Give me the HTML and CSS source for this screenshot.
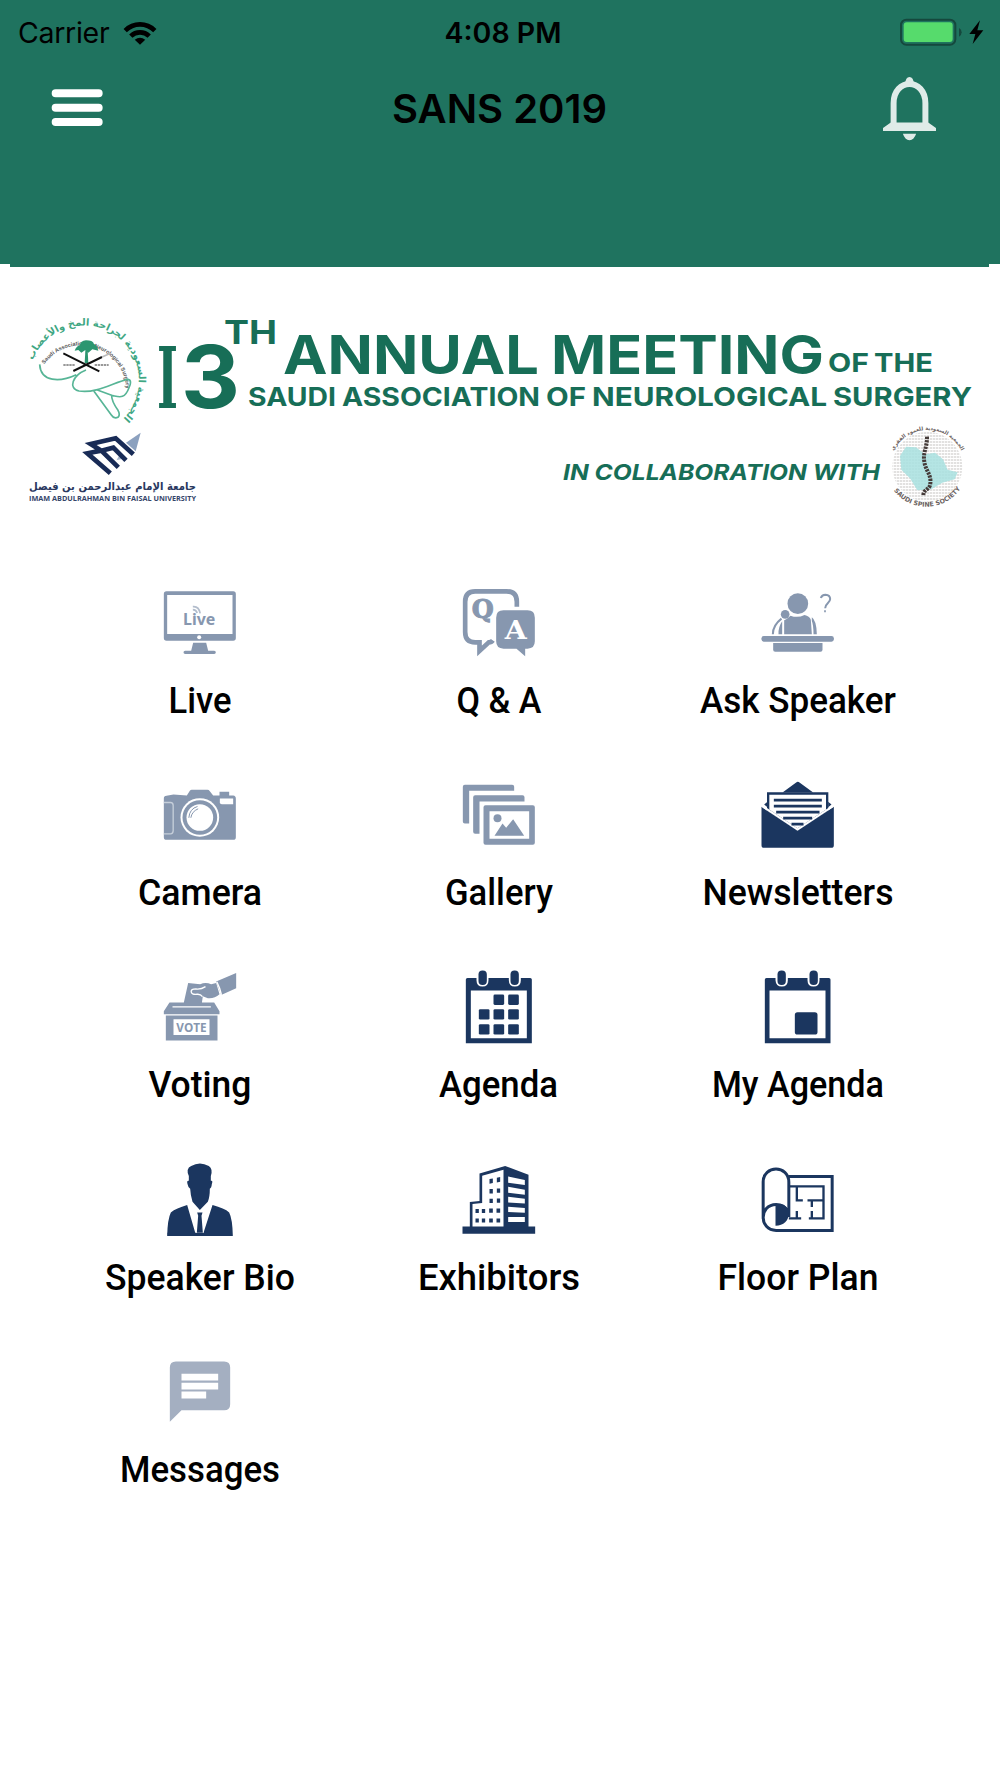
FILE: index.html
```html
<!DOCTYPE html>
<html lang="en">
<head>
<meta charset="utf-8">
<title>SANS 2019</title>
<link rel="stylesheet" href="styles.css">
</head>
<body>
<header class="header">
  <div class="status">
    <div class="status-left">
      <span class="carrier">Carrier</span>
      <svg class="wifi" viewBox="0 0 102 76"><path d="M1 27A71 71 0 0 1 101 27L91 37A57 57 0 0 0 11 37ZM18 44A47 47 0 0 1 84 44L74 54A33 33 0 0 0 28 54ZM35 60A26 26 0 0 1 67 60L51 75Z"/></svg>
    </div>
    <span class="time">4:08 PM</span>
    <svg class="battery" viewBox="0 0 252 84"><rect x="3" y="5" width="163" height="75" rx="16" fill="none" stroke="#15483d" stroke-width="6"/><path d="M177 30q8 4 8 13t-8 13Z" fill="#15483d"/><rect x="11" y="13" width="147" height="59" rx="9" fill="#56db6c"/><path d="M240 7L208 48h18l-8 30 32-41h-18Z"/></svg>
  </div>
  <div class="nav">
    <svg class="menu" viewBox="0 0 156 114"><path d="M14 13H143M14 56H143M14 99H143" fill="none" stroke="#fff" stroke-width="24" stroke-linecap="round"/></svg>
    <h1 class="title">SANS 2019</h1>
    <svg class="bell" viewBox="0 0 160 196"><path d="M67 24q1-21 13-21t13 21Z" fill="#dfebe8"/><path d="M32 145V82C32 5 128 5 128 82V145L145 157H15Z" fill="none" stroke="#dfebe8" stroke-width="18"/><path d="M2 164L24 140H136L158 164ZM60 174h40q-6 18-20 20-14-2-20-20Z" fill="#dfebe8"/></svg>
  </div>
</header>
<div class="header-edge"></div>

<svg class="banner" viewBox="0 267 1000 303">
  <defs>
    <path id="arc-ar" d="M32 362A55 55 0 1 1 122 420"/>
    <path id="arc-en" d="M42 368A45 45 0 0 1 126 393"/>
    <path id="arc-top" d="M893 452A38 38 0 0 1 962 452"/>
    <path id="arc-bot" d="M892 488A41 41 0 0 0 962 486"/>
    <pattern id="print" width="9" height="9" patternUnits="userSpaceOnUse"><path d="M0 3H7" stroke="#d4d2d1" stroke-width="4"/></pattern>
  </defs>

  <text class="arabic-arc"><textPath href="#arc-ar" startOffset="50%">الجمعية السعودية لجراحة المخ والأعصاب</textPath></text>
  <text class="english-arc"><textPath href="#arc-en" startOffset="50%">Saudi Association of Neurological Surgery</textPath></text>
  <g transform="translate(0 300) scale(.33333)">
    <g fill="none" stroke="#57b596" stroke-width="5" stroke-linejoin="round">
      <path d="M119 193C122 247 180 247 229 224M258 210C218 226 203 265 237 273C290 282 345 245 384 238C396 240 391 255 387 263C374 298 358 291 339 287L292 270M282 274L334 345Q342 358 355 351Q361 343 354 331Q334 302 335 286"/>
    </g>
    <path d="M224 152q5-14 16-17 1-12 18-14 20 0 23 10 11 4 14 21l-18-4-12 10-10-7-11 7-9-8Z" fill="#2c9670"/>
    <path d="M256 152h7l2 38h-11Z" fill="#2c9670"/>
    <path d="M190 160L298 214M220 213L306 171" stroke="#111" stroke-width="6"/>
    <path d="M306 171L332 160" stroke="#bbb" stroke-width="5"/>
    <path d="M190 195h35M284 195h42" stroke="#777" stroke-width="5" stroke-dasharray="7 2"/>
    <path d="M422 398L378 428 407 454Z" fill="#8ca1bf"/>
    <path d="M350 480L362 458 382 475Z" fill="#a9b7cc"/>
    <path d="M400 463L347 415 272 432 304 452 340 443 378 481M304 452L355 502M304 452L262 460 331 520" fill="none" stroke="#182b56" stroke-width="14"/>
  </g>
  <text class="uni-ar" x="112.5" y="490" textLength="167" lengthAdjust="spacingAndGlyphs">جامعة الإمام عبدالرحمن بن فيصل</text>
  <text class="uni-en" x="29" y="501" textLength="167" lengthAdjust="spacingAndGlyphs">IMAM ABDULRAHMAN BIN FAISAL UNIVERSITY</text>

  <g class="headline">
    <text class="serif" x="157" y="408" font-size="85" textLength="21" lengthAdjust="spacingAndGlyphs">I</text>
    <text x="181" y="407.5" font-size="86" textLength="59" lengthAdjust="spacingAndGlyphs">3</text>
    <text x="224" y="344" font-size="32" textLength="53" lengthAdjust="spacingAndGlyphs">TH</text>
    <text x="283" y="374" font-size="53" textLength="256" lengthAdjust="spacingAndGlyphs">ANNUAL</text>
    <text x="551" y="374" font-size="53" textLength="273" lengthAdjust="spacingAndGlyphs">MEETING</text>
    <text x="828" y="371.5" font-size="26" textLength="41" lengthAdjust="spacingAndGlyphs">OF</text>
    <text x="874" y="371.5" font-size="26" textLength="59" lengthAdjust="spacingAndGlyphs">THE</text>
    <text x="248" y="405.5" font-size="26" textLength="88" lengthAdjust="spacingAndGlyphs">SAUDI</text>
    <text x="342" y="405.5" font-size="26" textLength="198" lengthAdjust="spacingAndGlyphs">ASSOCIATION</text>
    <text x="546" y="405.5" font-size="26" textLength="40" lengthAdjust="spacingAndGlyphs">OF</text>
    <text x="592" y="405.5" font-size="26" textLength="235" lengthAdjust="spacingAndGlyphs">NEUROLOGICAL</text>
    <text x="833" y="405.5" font-size="26" textLength="139" lengthAdjust="spacingAndGlyphs">SURGERY</text>
    <text class="slanted" x="563" y="479.5" font-size="22" textLength="317" lengthAdjust="spacingAndGlyphs">IN COLLABORATION WITH</text>
  </g>

  <g transform="translate(540 300) scale(.33333)">
    <circle cx="1162" cy="500" r="105" fill="url(#print)"/>
    <path d="M1080 468l18-28 30 2 27 21 30-5 24 20 14 31 30 8-9 21-37 10-33 20-42 3-22-36-26-26Z" fill="#a8e0df" opacity=".85"/>
    <path d="M1161 410C1162 440 1148 458 1153 485C1156 512 1177 525 1170 556C1164 572 1150 568 1150 588" fill="none" stroke="#453b39" stroke-width="12" stroke-dasharray="7 3"/>
  </g>
  <text class="spine-text spine-ar"><textPath href="#arc-top" startOffset="50%">الجمعية السعودية للعمود الفقري</textPath></text>
  <text class="spine-text"><textPath href="#arc-bot" startOffset="50%">SAUDI SPINE SOCIETY</textPath></text>
</svg>

<main class="grid">
  <a class="tile">
    <svg class="icon muted" viewBox="166.5 0 270 270"><path fill-rule="evenodd" d="M201 64H401Q409 64 409 72V204Q409 212 401 212H201Q193 212 193 204V72Q193 64 201 64ZM203 75V192H399V75Z"/><circle class="paper" cx="299" cy="202" r="6"/><path d="M281 218h39l6 24h18q5 0 5 5t-5 5h-87q-5 0-5-5t5-5h18Z"/><text class="live-text" x="299" y="164" textLength="97" lengthAdjust="spacingAndGlyphs">Live</text><path d="M280 110q18-2 22 20M280 119q10 0 13 10" fill="none" stroke="#b3bdcc" stroke-width="5"/></svg>
    <svg class="label" viewBox="0 0 240 102.2"><text x="120" y="52.7" textLength="63" lengthAdjust="spacingAndGlyphs">Live</text></svg>
  </a>
  <a class="tile">
    <svg class="icon muted" viewBox="1063.5 0 270 270"><path d="M1252 110V95Q1252 64 1221 64H1127Q1097 64 1097 95V186Q1097 217 1127 217H1140V243L1168 217Q1176 217 1180 211" fill="none" stroke="#8797af" stroke-width="14"/><path d="M1212 121H1284Q1306 121 1306 143V214Q1306 236 1284 236H1277V259L1251 236H1212Q1190 236 1190 214V143Q1190 121 1212 121Z"/><text class="qa-text q-glyph" x="1150" y="143" textLength="66" lengthAdjust="spacingAndGlyphs">Q</text><text class="qa-text paper" x="1249" y="207" textLength="66" lengthAdjust="spacingAndGlyphs">A</text></svg>
    <svg class="label" viewBox="0 0 240 102.2"><text x="120" y="52.7" textLength="85" lengthAdjust="spacingAndGlyphs">Q &amp; A</text></svg>
  </a>
  <a class="tile">
    <svg class="icon muted" viewBox="280.5 0 270 270"><circle cx="415" cy="101" r="31"/><circle cx="377" cy="133" r="13"/><path d="M374 193V151Q381 148 393 137Q415 145 435 135Q450 138 454 149L457 193ZM357 193q-1-22 11-39v39ZM457 142q14 9 15 51h-10q0-28-5-40Z"/><path d="M340 193Q340 166 366 146" fill="none" stroke="#8797af" stroke-width="6"/><rect x="306" y="198" width="217" height="17" rx="7"/><path d="M341 219H489V239Q489 245 483 245H347Q341 245 341 239Z"/><path d="M484 84q3-10 14-10 14 1 14 13c0 12-15 12-15 28M494 124h5" fill="none" stroke="#8797af" stroke-width="6"/></svg>
    <svg class="label" viewBox="0 0 240 102.2"><text x="120" y="52.7" textLength="196" lengthAdjust="spacingAndGlyphs">Ask Speaker</text></svg>
  </a>

  <a class="tile">
    <svg class="icon muted" viewBox="166.5 6.6 270 270"><path d="M193 116Q193 108 201 108L222 104 262 107 271 93Q273 90 277 90H324Q328 90 331 94L341 107H360V96H389V107H401Q409 108 409 116V232Q409 240 401 240H201Q193 240 193 232Z"/><circle class="paper" cx="301" cy="173" r="58"/><circle cx="301" cy="173" r="52"/><circle class="paper" cx="301" cy="173" r="40"/><path class="paper" d="M361 116h40v17h-34q-6 0-6-6Z"/><path d="M193 128h20q8 0 8 9v76q0 9-8 9h-20" fill="none" stroke="#c6cfda" stroke-width="4"/><path d="M268 174q2-27 26-34M274 174q3-19 22-27" fill="none" stroke="#8797af" stroke-width="3"/></svg>
    <svg class="label" viewBox="0 0 240 102.2"><text x="120" y="52.7" textLength="124" lengthAdjust="spacingAndGlyphs">Camera</text></svg>
  </a>
  <a class="tile">
    <svg class="icon muted" viewBox="1063.5 6.6 270 270"><path d="M1090 81Q1090 75 1096 75H1238Q1244 75 1244 81V93H1109V191H1096Q1090 191 1090 185ZM1121 112Q1121 106 1127 106H1269Q1275 106 1275 112V125H1140V222H1127Q1121 222 1121 216Z"/><path fill-rule="evenodd" d="M1158 136H1300Q1306 136 1306 142V249Q1306 255 1300 255H1158Q1152 255 1152 249V142Q1152 136 1158 136ZM1170 154V237H1289V154Z"/><circle cx="1194" cy="175" r="12"/><path d="M1185 228L1209 191 1220 204 1241 178 1274 228Z"/></svg>
    <svg class="label" viewBox="0 0 240 102.2"><text x="120" y="52.7" textLength="108" lengthAdjust="spacingAndGlyphs">Gallery</text></svg>
  </a>
  <a class="tile">
    <svg class="icon" viewBox="280.5 576.6 270 270"><path d="M369 668L410 638Q415 634 420 638L461 668ZM314 704l10-8v16ZM516 704l-10-8v16Z"/><path class="paper" d="M326 671H503V721L414 780 326 721Z" stroke="#1b365f" stroke-width="7"/><path d="M306 711L414 783 523 711V826Q523 834 515 834H314Q306 834 306 826Z"/><path class="paper" d="M310 706L414 775 519 706 523 711 414 783 306 711Z"/><path d="M343 691H487M343 709H487M350 727H480M371 745H458M396 763H432" stroke="#1b365f" stroke-width="8"/></svg>
    <svg class="label" viewBox="0 0 240 102.2"><text x="120" y="52.7" textLength="191" lengthAdjust="spacingAndGlyphs">Newsletters</text></svg>
  </a>

  <a class="tile">
    <svg class="icon muted" viewBox="166.5 13.2 270 270"><path d="M266 100L302 104Q318 96 335 104L350 100 360 134Q345 148 325 146L310 140 306 168H251ZM350 96L410 70V116L365 136ZM210 159H344L360 185V194H193V185Z"/><path d="M352 97q9 17 14 39" stroke="#fff" stroke-width="4" fill="none"/><path d="M318 111q-14 9-29 7-14 0-14 8 0 10 18 8 10-1 16 7" fill="none" stroke="#fff" stroke-width="4"/><path d="M219 172H334" stroke="#fff" stroke-width="4"/><path fill-rule="evenodd" d="M199 198H354V273H199ZM222 209V256H330V209Z"/><text class="vote-text" x="276" y="246" textLength="91" lengthAdjust="spacingAndGlyphs">VOTE</text></svg>
    <svg class="label" viewBox="0 0 240 102.2"><text x="120" y="52.7" textLength="103" lengthAdjust="spacingAndGlyphs">Voting</text></svg>
  </a>
  <a class="tile">
    <svg class="icon" viewBox="1063.5 13.2 270 270"><path fill-rule="evenodd" d="M1104 85H1292Q1297 85 1297 90V281H1099V90Q1099 85 1104 85ZM1114 123V266H1282V123Z"/><path class="paper" d="M1131 80H1167V92Q1167 111 1149 111T1131 92ZM1228 80H1264V92Q1264 111 1246 111T1228 92Z"/><rect x="1137" y="63" width="25" height="43" rx="12"/><rect x="1233" y="63" width="25" height="43" rx="12"/><g><rect x="1182" y="135" width="32" height="31" rx="4"/><rect x="1226" y="135" width="32" height="31" rx="4"/><rect x="1138" y="179" width="32" height="31" rx="4"/><rect x="1182" y="179" width="32" height="31" rx="4"/><rect x="1226" y="179" width="32" height="31" rx="4"/><rect x="1138" y="224" width="32" height="31" rx="4"/><rect x="1182" y="224" width="32" height="31" rx="4"/><rect x="1226" y="224" width="32" height="31" rx="4"/></g></svg>
    <svg class="label" viewBox="0 0 240 102.2"><text x="119.5" y="52.7" textLength="119" lengthAdjust="spacingAndGlyphs">Agenda</text></svg>
  </a>
  <a class="tile">
    <svg class="icon" viewBox="280.5 13.2 270 270"><path fill-rule="evenodd" d="M321 85H508Q513 85 513 90V281H316V90Q316 85 321 85ZM330 123V266H498V123Z"/><path class="paper" d="M348 80H385V92Q385 111 367 111T348 92ZM444 80H480V92Q480 111 462 111T444 92Z"/><rect x="354" y="63" width="25" height="43" rx="12"/><rect x="450" y="63" width="25" height="43" rx="12"/><rect x="406" y="188" width="68" height="67" rx="8"/></svg>
    <svg class="label" viewBox="0 0 240 102.2"><text x="120" y="52.7" textLength="172" lengthAdjust="spacingAndGlyphs">My Agenda</text></svg>
  </a>

  <a class="tile">
    <svg class="icon" viewBox="166.5 19.8 270 270"><path d="M268 107Q258 85 275 77Q301 61 328 77Q341 86 334 107V121Q341 119 337 131Q336 143 331 145Q331 170 325 184L301 209 279 184Q273 165 272 145Q266 142 264 131Q261 119 268 121ZM263 194L290 277H203V287H400Q399 235 389 216Q375 204 339 194L312 277H290L263 194Q230 204 214 216Q204 236 203 287H290Z"/><path class="paper" d="M287 217L301 209 315 217 312 277H290Z"/><path d="M293 216H309L306 226 310 277H292L296 226Z"/></svg>
    <svg class="label" viewBox="0 0 240 102.2"><text x="120" y="52.7" textLength="190" lengthAdjust="spacingAndGlyphs">Speaker Bio</text></svg>
  </a>
  <a class="tile">
    <svg class="icon" viewBox="1063.5 19.8 270 270"><path d="M1089 258H1111V185L1140 182V99L1217 77 1287 103V258H1307V280H1089Z"/><path class="paper" d="M1148 106L1212 88V258H1119V191L1148 188ZM1226 108L1276 119V134L1226 127ZM1226 139L1276 148V163L1226 157ZM1226 169L1276 175V189L1226 186ZM1226 199L1276 203V217L1226 215ZM1226 230H1276V245H1226Z"/><path d="M1170 116l10-2v14l-10 2ZM1192 112l10-2v14l-10 2ZM1170 146h10v13h-10ZM1192 144h10v13h-10ZM1170 175h10v13h-10ZM1192 174h10v13h-10ZM1128 206h10v12h-10ZM1147 206h10v12h-10ZM1169 204h11v13h-11ZM1191 204h11v13h-11ZM1128 234h10v12h-10ZM1147 234h10v12h-10ZM1169 234h11v12h-11ZM1191 234h11v12h-11Z"/></svg>
    <svg class="label" viewBox="0 0 240 102.2"><text x="120" y="52.7" textLength="162" lengthAdjust="spacingAndGlyphs">Exhibitors</text></svg>
  </a>
  <a class="tile">
    <svg class="icon" viewBox="280.5 589.8 270 270"><g fill="none" stroke="#1b365f" stroke-width="9"><path d="M311 805V695C311 643 388 643 388 695V800M388 678H518V840H350C298 840 298 762 350 762C388 762 388 800 388 800"/><path d="M388 708H492V804H448M388 804H425M412 708V750H430M492 750H444M457 750V770M412 782V804M457 782V804" stroke-width="7"/></g><path d="M348 764C375 755 388 775 388 788C388 812 372 826 348 826Z"/></svg>
    <svg class="label" viewBox="0 0 240 102.2"><text x="120" y="52.7" textLength="161" lengthAdjust="spacingAndGlyphs">Floor Plan</text></svg>
  </a>

  <a class="tile">
    <svg class="icon faded" viewBox="166.5 -3.6 270 270"><path d="M229 64H374Q392 64 392 82V192Q392 210 374 210H246L211 245V82Q211 64 229 64Z"/><path class="paper" d="M246 101H356V121H246ZM246 128H356V148H246ZM246 154H320V175H246Z"/></svg>
    <svg class="label" viewBox="0 0 240 102.2"><text x="120" y="52.7" textLength="160" lengthAdjust="spacingAndGlyphs">Messages</text></svg>
  </a>
</main>
</body>
</html>
```
FILE: styles.css
```css
* { box-sizing: border-box; }
body {
  margin: 0;
  width: 1000px;
  height: 1778px;
  background: #fff;
  color: #000;
  font-family: Inter, "Liberation Sans", sans-serif;
  overflow: hidden;
}
svg { display: block; flex: none; }

.header { height: 264px; background: #1f735f; }
.header-edge { height: 3px; margin: 0 11px 0 10px; background: #1f735f; }

.status {
  display: grid;
  grid-template-columns: 1fr auto 1fr;
  align-items: center;
  height: 64px;
  padding: 0 16px 0 18px;
  font-size: 28.5px;
}
.status-left { display: flex; align-items: center; gap: 14px; }
.carrier { letter-spacing: -.3px; }
.wifi { width: 34px; height: 25px; }
.time { font-weight: 600; padding-left: 4px; }
.battery { width: 84px; height: 28px; justify-self: end; }

.nav {
  display: grid;
  grid-template-columns: 1fr auto 1fr;
  align-items: center;
  height: 88px;
  padding: 0 64px 0 51px;
}
.menu { width: 52px; height: 38px; }
.title { margin: 0; padding-left: 12px; font-size: 40px; font-weight: 600; }
.bell { width: 53px; height: 65px; justify-self: end; }

.banner { width: 1000px; height: 303px; }
.headline { fill: #176e57; font-family: Inter, sans-serif; font-weight: 700; }
.serif { font-family: "DejaVu Serif", serif; }
.slanted { font-style: italic; }
.arabic-arc { fill: #3fa783; font: 700 9.8px "DejaVu Sans", sans-serif; text-anchor: middle; }
.english-arc { fill: #555; font: 700 5.5px "Liberation Sans", sans-serif; text-anchor: middle; }
.uni-ar { fill: #29385f; font: 700 11px "DejaVu Sans", sans-serif; text-anchor: middle; }
.uni-en { fill: #35456a; font: 700 7.6px "Open Sans", sans-serif; }
.spine-text { fill: #6b6260; font: 700 6.3px "DejaVu Sans", sans-serif; text-anchor: middle; }
.spine-ar { font-size: 5.2px; }

.grid {
  display: grid;
  grid-template-columns: repeat(3, 299px);
  grid-auto-rows: 192.2px;
  margin-left: 50.5px;
}
.tile { display: flex; flex-direction: column; align-items: center; }
.icon { width: 90px; height: 90px; fill: #1b365f; }
.muted { fill: #8797af; }
.faded { fill: #a4afc1; }
.paper { fill: #fff; }
.label { width: 240px; height: 102.2px; margin-left: -1px; }
.label text { font: 500 37.5px Roboto, sans-serif; text-anchor: middle; }
.live-text { font: 700 46px "Noto Sans", sans-serif; text-anchor: middle; }
.qa-text { font: 700 78px "DejaVu Serif", serif; text-anchor: middle; }
.q-glyph { stroke: #8797af; stroke-width: 3px; }
.vote-text { font: 700 37px "Open Sans", sans-serif; text-anchor: middle; }
```
